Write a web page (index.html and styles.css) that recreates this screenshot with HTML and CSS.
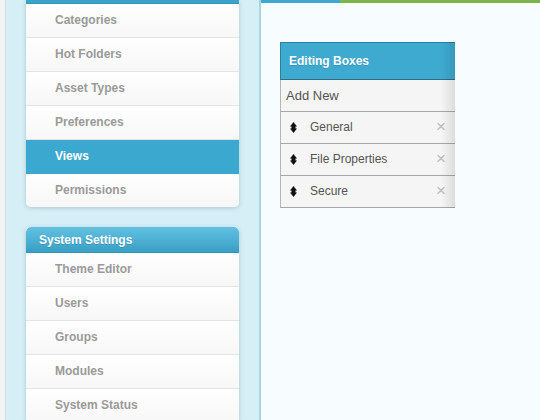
FILE: index.html
```html
<!DOCTYPE html>
<html>
<head>
<meta charset="utf-8">
<link rel="stylesheet" href="styles.css">
</head>
<body>
<div class="edge"></div>
<aside class="sidebar">
  <div class="card card-clipped">
    <div class="card-head"></div>
    <ul class="menu">
      <li>Categories</li>
      <li>Hot Folders</li>
      <li>Asset Types</li>
      <li>Preferences</li>
      <li class="active">Views</li>
      <li>Permissions</li>
    </ul>
  </div>
  <div class="card">
    <div class="card-head">System Settings</div>
    <ul class="menu">
      <li>Theme Editor</li>
      <li>Users</li>
      <li>Groups</li>
      <li>Modules</li>
      <li>System Status</li>
    </ul>
  </div>
</aside>
<main class="main">
  <div class="topbar"><span class="seg-blue"></span><span class="seg-green"></span></div>
  <section class="panel">
    <div class="panel-head">Editing Boxes</div>
    <div class="add-row">Add New</div>
    <div class="item"><svg class="handle" width="7" height="11" viewBox="0 0 7 11"><polygon points="3.5,0 7,4.5 0,4.5" fill="#111"/><rect x="1.5" y="4" width="4" height="3" fill="#111"/><polygon points="0,6.5 7,6.5 3.5,11" fill="#111"/></svg><span class="label">General</span><span class="remove">×</span></div>
    <div class="item"><svg class="handle" width="7" height="11" viewBox="0 0 7 11"><polygon points="3.5,0 7,4.5 0,4.5" fill="#111"/><rect x="1.5" y="4" width="4" height="3" fill="#111"/><polygon points="0,6.5 7,6.5 3.5,11" fill="#111"/></svg><span class="label">File Properties</span><span class="remove">×</span></div>
    <div class="item"><svg class="handle" width="7" height="11" viewBox="0 0 7 11"><polygon points="3.5,0 7,4.5 0,4.5" fill="#111"/><rect x="1.5" y="4" width="4" height="3" fill="#111"/><polygon points="0,6.5 7,6.5 3.5,11" fill="#111"/></svg><span class="label">Secure</span><span class="remove">×</span></div>
  </section>
</main>
</body>
</html>
```

FILE: styles.css
```css
* { box-sizing: border-box; }
html, body { margin: 0; padding: 0; }
body {
  display: flex;
  width: 540px;
  height: 420px;
  overflow: hidden;
  font-family: "Liberation Sans", Arial, Helvetica, sans-serif;
}
.edge {
  width: 6px;
  flex: none;
  background: #f3f3f3;
  border-right: 1px solid #d3dde0;
}
.sidebar {
  width: 255px;
  flex: none;
  background: #d6eef6;
  border-right: 2px solid #a9d4e4;
  padding: 0 20px;
}
.card {
  width: 213px;
  background: #fff;
  border-radius: 5px;
  box-shadow: 0 1px 4px rgba(60, 100, 120, 0.28);
  overflow: hidden;
  margin-bottom: 20px;
}
.card-clipped {
  border-radius: 0 0 5px 5px;
}
.card-head {
  height: 26px;
  line-height: 26px;
  padding-left: 13px;
  color: #fff;
  font-weight: bold;
  font-size: 12px;
  background: linear-gradient(#62c1e3, #3a9fc5);
  border-bottom: 1px solid #3596ba;
  border-radius: 5px 5px 0 0;
  text-shadow: 0 1px 0 rgba(0,0,0,0.15);
}
.card-clipped .card-head {
  margin-top: -22px;
  background: #3aa3c9;
  border-radius: 0;
}
.menu {
  list-style: none;
  margin: 0;
  padding: 0;
}
.menu li {
  height: 34px;
  line-height: 33px;
  padding-left: 29px;
  font-size: 12px;
  font-weight: bold;
  color: #9a9a9a;
  background: linear-gradient(#ffffff, #f7f7f7);
  border-bottom: 1px solid #e4e4e4;
}
.card-clipped .menu li:last-child { border-bottom: none; height: 33px; }
.menu li.active {
  background: #3ba8cf;
  color: #fff;
  border-bottom-color: #3ba8cf;
}
.main {
  flex: 1;
  background: #f6fcff;
}
.topbar {
  display: flex;
  height: 3px;
}
.seg-blue { width: 79px; background: #3fabd2; }
.seg-green { flex: 1; background: #7bb54c; }
.panel {
  position: relative;
  width: 175px;
  margin: 39px 0 0 19px;
}
.panel::after {
  content: "";
  position: absolute;
  top: 0; right: 0; bottom: 0;
  width: 14px;
  background: linear-gradient(to right, rgba(0,0,0,0), rgba(0,0,0,0.1));
  pointer-events: none;
}
.panel-head {
  height: 38px;
  line-height: 36px;
  padding-left: 8px;
  background: #3eaad0;
  border-top: 1px solid #2d819e;
  border-bottom: 1px solid #286f88;
  border-left: 1px solid #2d819e;
  color: #fff;
  font-weight: bold;
  font-size: 12px;
  text-shadow: 0 1px 0 rgba(0,0,0,0.15);
}
.add-row {
  height: 32px;
  line-height: 31px;
  padding-left: 5px;
  font-size: 13px;
  color: #555;
  background: #f5f5f5;
  border-left: 1px solid #b5b5b5;
  border-bottom: 1px solid #a8a8a8;
}
.item {
  display: flex;
  align-items: center;
  height: 32px;
  padding-left: 9px;
  padding-bottom: 1px;
  font-size: 12px;
  color: #555;
  background: #f5f5f5;
  border-left: 1px solid #b5b5b5;
  border-bottom: 1px solid #a8a8a8;
}
.handle { flex: none; margin-right: 13px; }
.label { flex: 1; }
.remove {
  color: #bcbcbc;
  font-size: 17px;
  width: 19px;
}
```
